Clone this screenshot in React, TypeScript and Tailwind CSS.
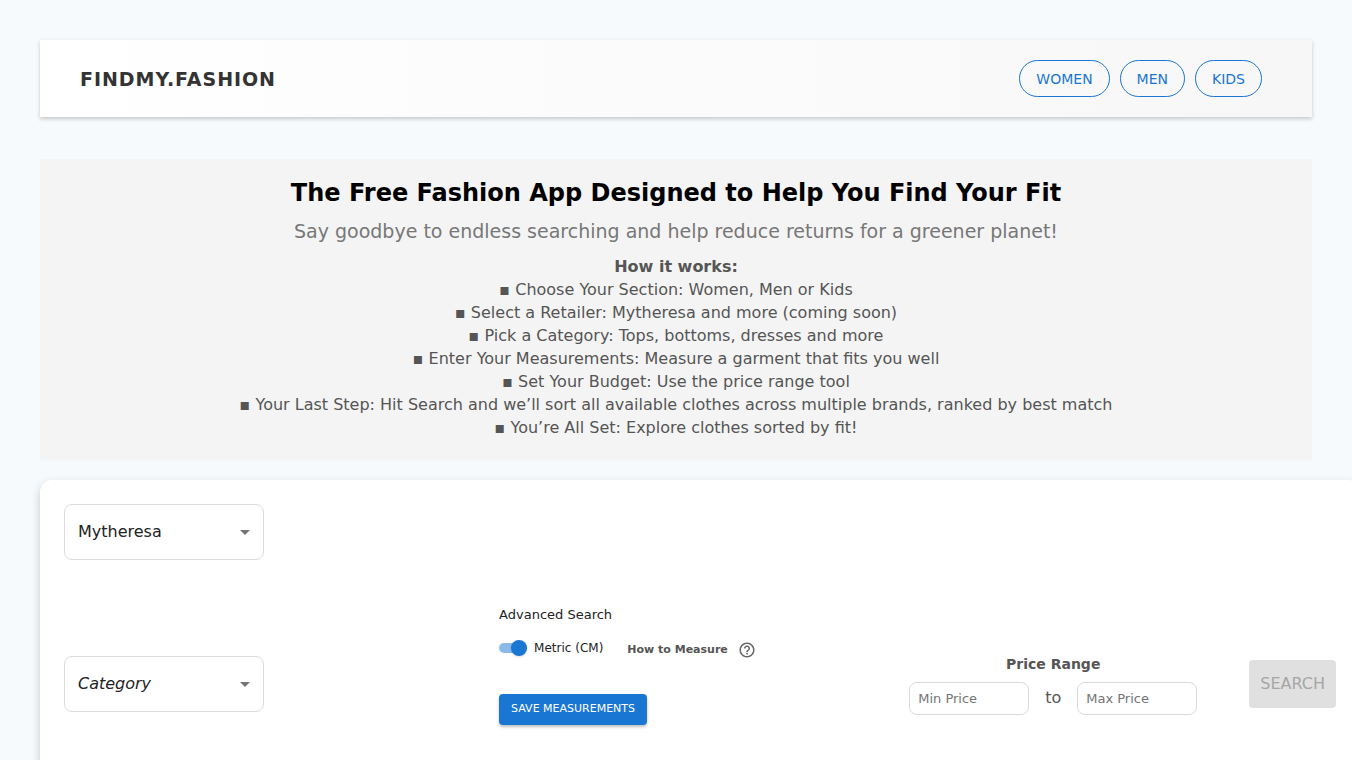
import { useState } from "react";
import { MdArrowDropDown, MdHelpOutline } from "react-icons/md";

const sections = ["Women", "Men", "Kids"];

const steps = [
  "Choose Your Section: Women, Men or Kids",
  "Select a Retailer: Mytheresa and more (coming soon)",
  "Pick a Category: Tops, bottoms, dresses and more",
  "Enter Your Measurements: Measure a garment that fits you well",
  "Set Your Budget: Use the price range tool",
  "Your Last Step: Hit Search and we’ll sort all available clothes across multiple brands, ranked by best match",
  "You’re All Set: Explore clothes sorted by fit!",
];

const retailers = ["Mytheresa"];
const categories = ["Tops", "Bottoms", "Dresses"];

type DropdownProps = {
  label: string;
  value: string;
  options: string[];
  placeholder?: string;
  onChange: (value: string) => void;
};

function Dropdown({ label, value, options, placeholder, onChange }: DropdownProps) {
  return (
    <div className="relative w-[200px]">
      <select
        aria-label={label}
        value={value}
        onChange={(e) => onChange(e.target.value)}
        className={`h-14 w-full appearance-none rounded-lg border border-[#dcdcdc] bg-white px-[13px] text-base text-[#222] ${
          value ? "" : "italic"
        }`}
      >
        {placeholder && <option value="">{placeholder}</option>}
        {options.map((option) => (
          <option key={option} value={option}>
            {option}
          </option>
        ))}
      </select>
      <MdArrowDropDown className="pointer-events-none absolute top-4 right-[7px] h-6 w-6 text-[#757575]" />
    </div>
  );
}

function PriceInput({ label, value, onChange }: { label: string; value: string; onChange: (value: string) => void }) {
  return (
    <input
      type="text"
      inputMode="numeric"
      aria-label={label}
      placeholder={label}
      value={value}
      onChange={(e) => onChange(e.target.value)}
      className="h-[33px] w-[120px] rounded-lg border border-[#dadada] bg-white px-2 text-[13px] text-[#222] placeholder:text-[#757575]"
    />
  );
}

export default function App() {
  const [retailer, setRetailer] = useState("Mytheresa");
  const [category, setCategory] = useState("");
  const [metric, setMetric] = useState(true);
  const [minPrice, setMinPrice] = useState("");
  const [maxPrice, setMaxPrice] = useState("");

  return (
    <div className="min-h-screen overflow-hidden bg-[#f7fafc] p-10 font-['DejaVu_Sans',sans-serif]">
      <header className="flex items-center justify-between bg-linear-to-r from-white to-[#f7f7f7] py-5 pr-[50px] pl-10 shadow-[0_2px_4px_rgba(0,0,0,0.2)]">
        <h1 className="text-[19px] leading-7 font-bold tracking-wider text-[#333]">FINDMY.FASHION</h1>
        <nav className="flex gap-2.5">
          {sections.map((section) => (
            <button
              key={section}
              type="button"
              className="h-[37px] rounded-[20px] border border-[#1976d2] px-4 text-sm text-[#1976d2] uppercase hover:bg-blue-50"
            >
              {section}
            </button>
          ))}
        </nav>
      </header>

      <section className="mt-[42px] bg-[#f4f4f4] px-5 pt-[18px] pb-[21px] text-center">
        <h2 className="text-2xl font-bold text-black">The Free Fashion App Designed to Help You Find Your Fit</h2>
        <p className="mt-2 text-[19px] leading-7 text-[#777]">
          Say goodbye to endless searching and help reduce returns for a greener planet!
        </p>
        <div className="mt-2.5 text-base leading-[23px] text-[#555]">
          <p className="font-bold">How it works:</p>
          <ul>
            {steps.map((step) => (
              <li key={step}>▪ {step}</li>
            ))}
          </ul>
        </div>
      </section>

      {/* the card keeps its padding outside of the page width */}
      <form
        onSubmit={(e) => e.preventDefault()}
        className="mt-5 box-content w-full rounded-xl bg-white p-6 shadow-[0_4px_10px_rgba(0,0,0,0.2)]"
      >
        <Dropdown label="Retailer" value={retailer} options={retailers} onChange={setRetailer} />

        <div className="mt-[45px] grid grid-cols-[435fr_410fr_340fr_auto] items-center">
          <Dropdown
            label="Category"
            placeholder="Category"
            value={category}
            options={categories}
            onChange={setCategory}
          />

          <div className="pb-[38px]">
            <p className="text-[13px] leading-5 text-[#222]">Advanced Search</p>
            <div className="mt-[11px] flex h-6 items-center gap-6">
              <label className="flex items-center gap-[7px] text-xs text-[#222]">
                <input
                  type="checkbox"
                  checked={metric}
                  onChange={(e) => setMetric(e.target.checked)}
                  className="relative h-2.5 w-7 appearance-none rounded-full bg-gray-300 before:absolute before:-top-[3px] before:left-0 before:h-4 before:w-4 before:rounded-full before:bg-white before:shadow checked:bg-[#8cbae8] checked:before:left-3 checked:before:bg-[#1976d2]"
                />
                Metric (CM)
              </label>
              <div className="flex items-center gap-2.5 pt-1 text-[#666]">
                <span className="text-[11px] font-bold text-[#555]">How to Measure</span>
                <button type="button" aria-label="How to measure">
                  <MdHelpOutline className="h-[18px] w-[18px]" />
                </button>
              </div>
            </div>
            <button
              type="button"
              className="mt-[34px] h-[31px] rounded bg-[#1976d2] px-3 text-[11px] text-white uppercase shadow-[0_2px_3px_rgba(0,0,0,0.25)]"
            >
              Save Measurements
            </button>
          </div>

          <fieldset className="w-72">
            <legend className="mx-auto text-sm font-bold text-[#555]">Price Range</legend>
            <div className="mt-2 flex items-center gap-4 text-base text-[#555]">
              <PriceInput label="Min Price" value={minPrice} onChange={setMinPrice} />
              to
              <PriceInput label="Max Price" value={maxPrice} onChange={setMaxPrice} />
            </div>
          </fieldset>

          <button
            type="submit"
            disabled
            className="h-12 rounded bg-[#e0e0e0] px-[11px] text-base text-[#a6a6a6] uppercase"
          >
            Search
          </button>
        </div>
      </form>
    </div>
  );
}
